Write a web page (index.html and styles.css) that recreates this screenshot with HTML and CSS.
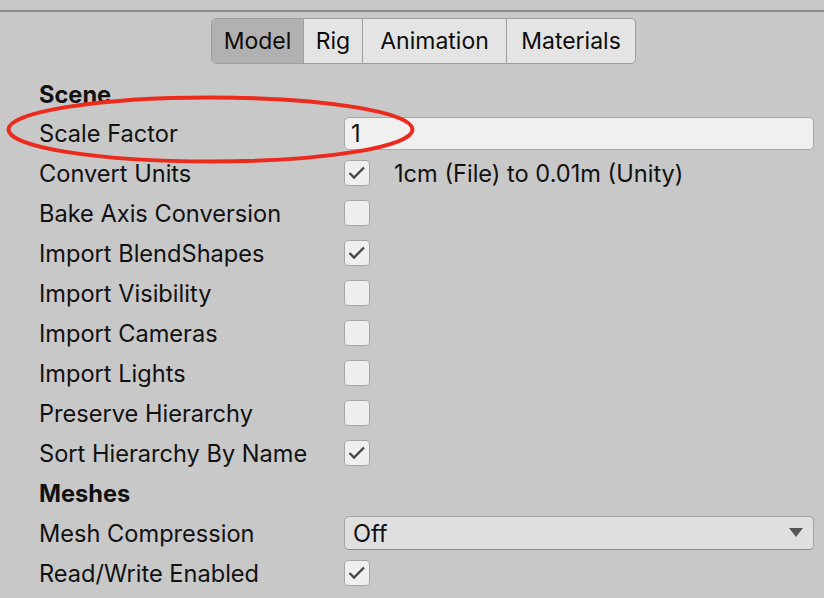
FILE: index.html
```html
<!DOCTYPE html>
<html>
<head>
<meta charset="utf-8">
<link rel="stylesheet" href="styles.css">
</head>
<body>
<div class="topbar"></div>
<div class="tabs">
  <div class="tab active t-model">Model</div>
  <div class="tab t-rig">Rig</div>
  <div class="tab t-anim">Animation</div>
  <div class="tab t-mat">Materials</div>
</div>
<div class="panel">
  <div class="row header first">Scene</div>
  <div class="row"><span class="label">Scale Factor</span><div class="field text">1</div></div>
  <div class="row"><span class="label">Convert Units</span><div class="val"><span class="cb on"><svg viewBox="0 0 24 24"><path d="M4.5 12 L9 16.5 L19 6.5"/></svg></span><span class="note">1cm (File) to 0.01m (Unity)</span></div></div>
  <div class="row"><span class="label">Bake Axis Conversion</span><div class="val"><span class="cb"></span></div></div>
  <div class="row"><span class="label">Import BlendShapes</span><div class="val"><span class="cb on"><svg viewBox="0 0 24 24"><path d="M4.5 12 L9 16.5 L19 6.5"/></svg></span></div></div>
  <div class="row"><span class="label">Import Visibility</span><div class="val"><span class="cb"></span></div></div>
  <div class="row"><span class="label">Import Cameras</span><div class="val"><span class="cb"></span></div></div>
  <div class="row"><span class="label">Import Lights</span><div class="val"><span class="cb"></span></div></div>
  <div class="row"><span class="label">Preserve Hierarchy</span><div class="val"><span class="cb"></span></div></div>
  <div class="row"><span class="label">Sort Hierarchy By Name</span><div class="val"><span class="cb on"><svg viewBox="0 0 24 24"><path d="M4.5 12 L9 16.5 L19 6.5"/></svg></span></div></div>
  <div class="row header">Meshes</div>
  <div class="row"><span class="label">Mesh Compression</span><div class="field dropdown"><span>Off</span><svg class="arrow" viewBox="0 0 14 10"><path d="M0 0 H14 L7 9 Z"/></svg></div></div>
  <div class="row"><span class="label">Read/Write Enabled</span><div class="val"><span class="cb on"><svg viewBox="0 0 24 24"><path d="M4.5 12 L9 16.5 L19 6.5"/></svg></span></div></div>
  <div class="row"><span class="label"></span><div class="field dropdown"></div></div>
</div>
<svg class="circle" width="824" height="598" viewBox="0 0 824 598"><ellipse cx="210.5" cy="129.5" rx="202" ry="32"/></svg>
</body>
</html>
```

FILE: styles.css
```css
html, body {
  margin: 0;
  padding: 0;
  width: 824px;
  height: 598px;
  overflow: hidden;
  background: #c8c8c8;
  font-family: Inter, "Noto Sans", sans-serif;
  font-size: 23.6px;
  color: #111;
}
.topbar {
  height: 10px;
  border-bottom: 2px solid #898989;
}
.tabs {
  display: flex;
  margin: 6px 0 0 211px;
  width: 425px;
  height: 46px;
  box-sizing: border-box;
  border: 1px solid #9e9e9e;
  border-radius: 5px;
  overflow: hidden;
  background: #e4e4e4;
  font-size: 23px;
}
.tab {
  display: flex;
  align-items: center;
  justify-content: center;
  height: 100%;
  box-sizing: border-box;
  border-right: 1px solid #9e9e9e;
  color: #0c0c0c;
}
.tab:last-child { border-right: none; }
.tab.active { background: #b1b1b1; }
.t-model { width: 92px; }
.t-rig { width: 59px; }
.t-anim { width: 144px; }
.t-mat { flex: 1; }
.panel {
  padding: 0 10px 0 39px;
  margin-top: 11px;
  height: 520px;
  overflow: hidden;
}
.row {
  display: flex;
  align-items: center;
  height: 40px;
}
.row.header {
  font-weight: 700;
}
.row.header.first { height: 38px; }
.label {
  width: 305px;
  flex: none;
}
.val {
  display: flex;
  align-items: center;
}
.field {
  flex: 1;
  box-sizing: border-box;
  height: 34px;
  border-radius: 5px;
  display: flex;
  align-items: center;
}
.field.text {
  background: #f0f0f0;
  border: 1px solid #a8a8a8;
  padding-left: 6px;
  height: 33px;
}
.field.dropdown {
  background: #dfdfdf;
  border: 1px solid #a3a3a3;
  border-bottom-color: #8a8a8a;
  padding: 0 10px 0 8px;
  justify-content: space-between;
}
.arrow {
  width: 14px;
  height: 10px;
}
.arrow path { fill: #555; }
.cb {
  width: 26px;
  height: 26px;
  box-sizing: border-box;
  border: 1px solid #a6a6a6;
  border-radius: 4px;
  background: #efefef;
  display: inline-block;
}
.cb svg {
  width: 24px;
  height: 24px;
  display: block;
}
.cb svg path {
  fill: none;
  stroke: #454545;
  stroke-width: 2.3;
}
.note {
  margin-left: 24px;
}
.circle {
  position: absolute;
  left: 0;
  top: 0;
  pointer-events: none;
}
.circle ellipse {
  fill: none;
  stroke: #ec2b1d;
  stroke-width: 4;
}
```
